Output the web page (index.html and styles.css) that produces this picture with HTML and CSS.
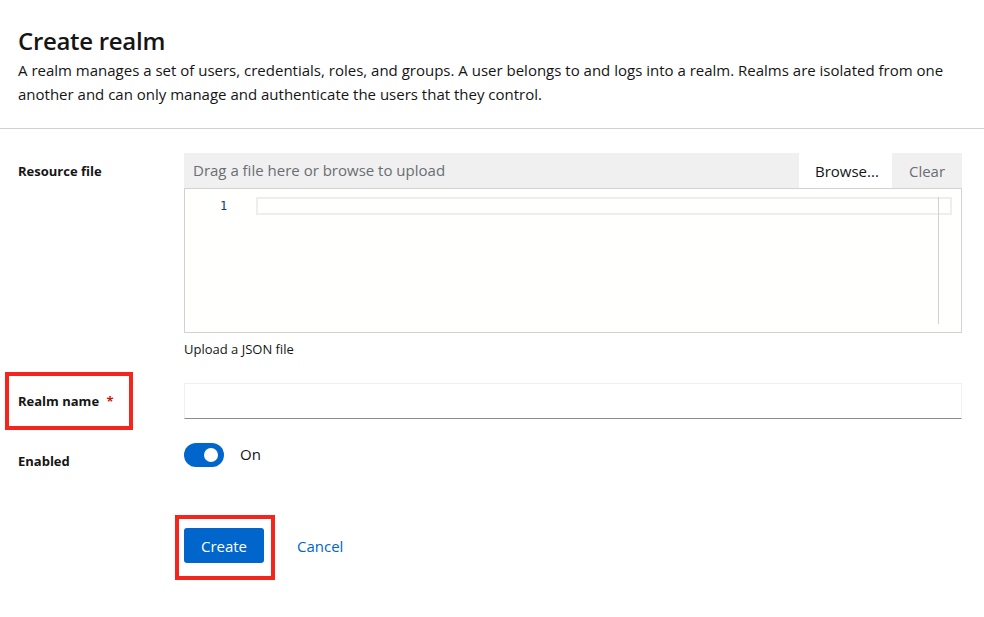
FILE: index.html
```html
<!DOCTYPE html>
<html lang="en">
<head>
<meta charset="utf-8">
<title>Create realm</title>
<link rel="stylesheet" href="styles.css">
</head>
<body>
<header class="page-header">
  <h1 class="title">Create realm</h1>
  <p class="desc">A realm manages a set of users, credentials, roles, and groups. A user belongs to and logs into a realm. Realms are isolated from one another and can only manage and authenticate the users that they control.</p>
</header>
<main class="form">
  <div class="row">
    <div class="label label-top">Resource file</div>
    <div class="control">
      <div class="upload">
        <div class="upload-bar">
          <span class="upload-text">Drag a file here or browse to upload</span>
          <button class="btn-browse">Browse...</button>
          <button class="btn-clear">Clear</button>
        </div>
        <div class="editor">
          <div class="gutter">1</div>
          <div class="code">
            <div class="active-line"></div>
            <div class="ruler"></div>
          </div>
        </div>
      </div>
      <div class="helper">Upload a JSON file</div>
    </div>
  </div>
  <div class="row">
    <div class="label label-input"><span class="annot-label">Realm name <span class="req">*</span></span></div>
    <div class="control"><div class="text-input"></div></div>
  </div>
  <div class="row">
    <div class="label label-switch">Enabled</div>
    <div class="control switch-row">
      <span class="switch"><span class="knob"></span></span>
      <span class="switch-text">On</span>
    </div>
  </div>
  <div class="row actions-row">
    <div></div>
    <div class="actions">
      <span class="annot-btn"><button class="btn-primary">Create</button></span>
      <a class="link" href="#">Cancel</a>
    </div>
  </div>
</main>
</body>
</html>
```
FILE: styles.css
```css
*, *::before, *::after { box-sizing: border-box; }
body {
  margin: 0;
  font-family: "Open Sans", "Liberation Sans", sans-serif;
  color: #151515;
  background: #fff;
}
.page-header {
  padding: 26px 22px 22px 18px;
  border-bottom: 1px solid #d2d2d2;
}
.title {
  margin: 0;
  font-size: 24px;
  line-height: 30px;
  font-weight: 600;
  letter-spacing: -0.3px;
}
.desc {
  margin: 2px 0 0;
  font-size: 15px;
  line-height: 24px;
}
.form {
  padding: 24px 22px 40px 18px;
  display: flex;
  flex-direction: column;
  gap: 24px;
}
.row {
  display: grid;
  grid-template-columns: 166px 1fr;
}
.label {
  font-size: 13px;
  font-weight: 700;
  line-height: 20px;
}
.label-top { padding-top: 8px; }
.label-input { padding-top: 8px; position: relative; }
.label-switch { padding-top: 8px; }
.req { color: #c9190b; margin-left: 4px; }
.annot-label { position: relative; }
.annot-label::before {
  content: "";
  position: absolute;
  left: -13px;
  top: -20px;
  width: 128px;
  height: 58px;
  border: 4px solid #f4251c;
}
.upload-bar {
  display: flex;
  align-items: stretch;
  height: 35px;
  background: #f0f0f0;
}
.upload-text {
  flex: 1;
  padding-left: 9px;
  font-size: 15px;
  line-height: 35px;
  color: #6a6e73;
}
.btn-browse, .btn-clear {
  border: 0;
  font-family: inherit;
  font-size: 15px;
  padding: 0 16px;
  cursor: pointer;
}
.btn-browse { background: #fff; color: #151515; width: 93px; }
.btn-clear { background: #f0f0f0; color: #6a6e73; width: 70px; }
.editor {
  display: flex;
  height: 145px;
  border: 1px solid #d2d2d2;
  background: #fffffe;
}
.gutter {
  width: 71px;
  padding: 8px 0 0 6px;
  text-align: center;
  font-family: "DejaVu Sans Mono", monospace;
  font-size: 12px;
  line-height: 18px;
  color: #23307a;
}
.code {
  flex: 1;
  position: relative;
}
.active-line {
  position: absolute;
  left: 0;
  right: 9px;
  top: 8px;
  height: 18px;
  border: 2px solid #eeeeee;
}
.ruler {
  position: absolute;
  right: 22px;
  top: 8px;
  bottom: 8px;
  width: 1px;
  background: #d2d2d2;
}
.helper {
  margin-top: 6px;
  font-size: 13px;
  line-height: 20px;
}
.text-input {
  height: 36px;
  border: 1px solid #f0f0f0;
  border-bottom-color: #8a8d90;
}
.switch-row {
  display: flex;
  align-items: center;
  gap: 16px;
  padding-top: 0;
  align-self: start;
}
.switch {
  position: relative;
  width: 40px;
  height: 24px;
  border-radius: 12px;
  background: #0066cc;
}
.knob {
  position: absolute;
  right: 6px;
  top: 5px;
  width: 14px;
  height: 14px;
  border-radius: 50%;
  background: #fff;
}
.switch-text { font-size: 15px; line-height: 24px; margin-top: -2px; }
.actions-row { margin-top: 33px; }
.actions {
  display: flex;
  align-items: center;
  gap: 33px;
}
.annot-btn { position: relative; display: inline-block; }
.annot-btn::before {
  content: "";
  position: absolute;
  left: -9px;
  top: -13px;
  width: 100px;
  height: 65px;
  border: 4px solid #f4251c;
}
.btn-primary {
  display: block;
  width: 80px;
  height: 35px;
  border: 0;
  border-radius: 3px;
  background: #0066cc;
  color: #fff;
  font-family: inherit;
  font-size: 15px;
  cursor: pointer;
}
.link {
  color: #0066cc;
  text-decoration: none;
  font-size: 15px;
}
```
